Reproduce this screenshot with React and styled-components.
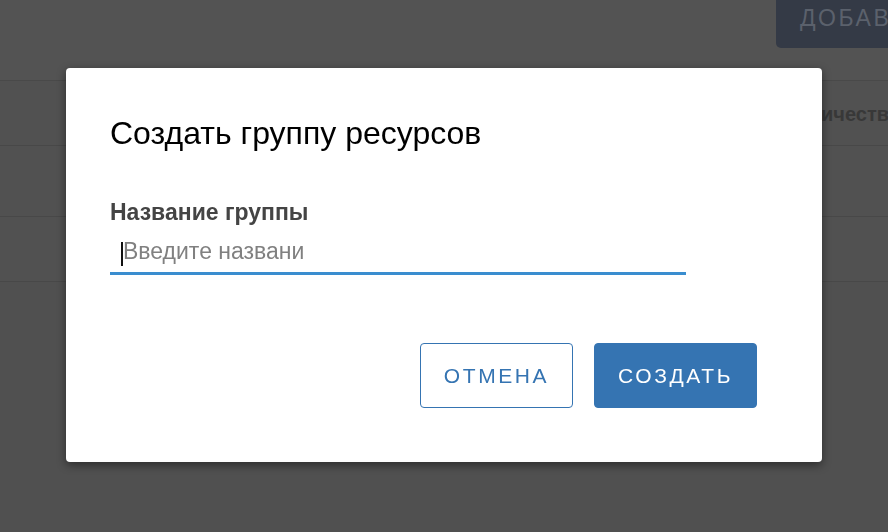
import React from 'react';
import styled, { createGlobalStyle } from 'styled-components';

const GlobalStyle = createGlobalStyle`
    html, body {
        margin: 0;
        padding: 0;
        height: 100%;
        background: #505050;
        font-family: "Liberation Sans", Arial, sans-serif;
        overflow: hidden;
    }
`

const Page = styled.div`
    width: 888px;
    height: 532px;
    background: #505050;
    overflow: hidden;
`

const Header = styled.div`
    height: 81px;
    display: flex;
    justify-content: flex-end;
    align-items: flex-start;
    background: #535353;
    border-bottom: 1px solid #494949;
    box-sizing: border-box;
`

const AddButton = styled.div`
    flex: none;
    width: 180px;
    margin-top: -8px;
    margin-right: -68px;
    height: 56px;
    padding: 0 0 4px 24px;
    display: flex;
    align-items: center;
    background: #343a46;
    border-radius: 5px;
    color: #5b616c;
    font-size: 23px;
    letter-spacing: 2.5px;
    text-transform: uppercase;
    white-space: nowrap;
    box-sizing: border-box;
`

const Row = styled.div`
    height: ${props => props.h}px;
    display: flex;
    align-items: center;
    justify-content: flex-end;
    border-bottom: 1px solid #484848;
    box-sizing: border-box;
    background: #515151;
`

const HeadCell = styled.div`
    margin-right: -13px;
    margin-top: 2px;
    color: #383838;
    font-size: 20px;
    font-weight: bold;
    white-space: nowrap;
`

const Backdrop = styled.div`
    position: fixed;
    inset: 0;
    display: flex;
    align-items: center;
    justify-content: center;
`

const Modal = styled.div`
    width: 756px;
    margin-bottom: 2px;
    background: #fff;
    border-radius: 4px;
    box-shadow: 0 3px 10px rgba(0, 0, 0, 0.45);
    padding: 46px 44px 54px 44px;
    box-sizing: border-box;
    display: flex;
    flex-direction: column;
`

const Title = styled.h2`
    margin: 0;
    font-size: 32px;
    line-height: 38px;
    font-weight: normal;
    color: #000;
`

const Label = styled.label`
    margin-top: 47px;
    font-size: 23px;
    font-weight: bold;
    color: #444;
    line-height: 26px;
`

const Field = styled.div`
    position: relative;
    margin-top: 7px;
    width: 576px;
`

const Input = styled.input`
    display: block;
    width: 100%;
    box-sizing: border-box;
    border: none;
    border-bottom: 3px solid #3a8dcf;
    outline: none;
    padding: 6px 10px 7px 13px;
    font-family: "Liberation Sans", Arial, sans-serif;
    font-size: 23px;
    line-height: 27px;
    color: #222;

    &::placeholder {
        color: #808080;
    }
`

const Caret = styled.span`
    position: absolute;
    left: 11px;
    top: 10px;
    width: 2px;
    height: 24px;
    background: #111;
`

const Actions = styled.div`
    margin-top: 68px;
    padding-right: 21px;
    display: flex;
    justify-content: flex-end;
    gap: 21px;
`

const Button = styled.button`
    height: 65px;
    min-width: ${props => props.w}px;
    box-sizing: border-box;
    border-radius: 4px;
    border: 1px solid #3574b2;
    background: ${props => props.primary ? '#3574b2' : '#fff'};
    color: ${props => props.primary ? '#fff' : '#3574b2'};
    font-family: "Liberation Sans", Arial, sans-serif;
    font-size: 21px;
    letter-spacing: 2.6px;
    text-transform: uppercase;
    cursor: pointer;
`

function App() {
    return (
        <>
            <GlobalStyle />
            <Page>
                <Header>
                    <AddButton>Добавить</AddButton>
                </Header>
                <Row h={65}>
                    <HeadCell>Количество</HeadCell>
                </Row>
                <Row h={71} />
                <Row h={65} />
            </Page>
            <Backdrop>
                <Modal>
                    <Title>Создать группу ресурсов</Title>
                    <Label htmlFor="group-name">Название группы</Label>
                    <Field>
                        <Input id="group-name" placeholder="Введите названи" />
                        <Caret />
                    </Field>
                    <Actions>
                        <Button w={153}>Отмена</Button>
                        <Button w={163} primary>Создать</Button>
                    </Actions>
                </Modal>
            </Backdrop>
        </>
    )
}

export default App;
